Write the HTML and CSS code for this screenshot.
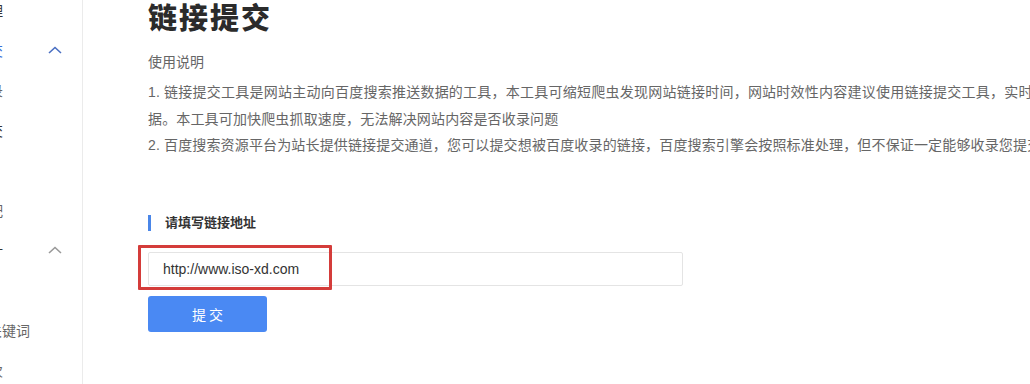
FILE: index.html
```html
<!DOCTYPE html>
<html lang="zh-CN">
<head>
<meta charset="utf-8">
<title>链接提交</title>
<link rel="stylesheet" href="styles.css">
</head>
<body>
<div class="layout">
  <aside class="sidebar">
    <ul class="nav">
      <li class="nav-item dark"><span class="nav-text">站点管理</span></li>
      <li class="nav-item active"><span class="nav-text">资源提交</span>
        <svg class="chev" viewBox="0 0 14 8" width="14" height="8"><path d="M1 7 L7 1.5 L13 7" fill="none" stroke="currentColor" stroke-width="1.6"/></svg>
      </li>
      <li class="nav-item gray"><span class="nav-text">普通收录</span></li>
      <li class="nav-item dark"><span class="nav-text">链接提交</span></li>
      <li class="nav-item gray"><span class="nav-text nav-text-hidden">死链</span></li>
      <li class="nav-item gray"><span class="nav-text">移动适配</span></li>
      <li class="nav-item dark"><span class="nav-text">搜索统计</span>
        <svg class="chev chev-gray" viewBox="0 0 14 8" width="14" height="8"><path d="M1 7 L7 1.5 L13 7" fill="none" stroke="currentColor" stroke-width="1.6"/></svg>
      </li>
      <li class="nav-item gray"><span class="nav-text nav-text-hidden">流量</span></li>
      <li class="nav-item gray"><span class="nav-text nav-text-left">关键词</span></li>
      <li class="nav-item gray"><span class="nav-text">抓取频次</span></li>
    </ul>
  </aside>
  <main class="main">
    <div class="content">
      <h1 class="title">链接提交</h1>
      <p class="usage-title">使用说明</p>
      <p class="usage">1. 链接提交工具是网站主动向百度搜索推送数据的工具，本工具可缩短爬虫发现网站链接时间，网站时效性内容建议使用链接提交工具，实时向搜索推送数据。本工具可加快爬虫抓取速度，无法解决网站内容是否收录问题</p>
      <p class="usage">2. 百度搜索资源平台为站长提供链接提交通道，您可以提交想被百度收录的链接，百度搜索引擎会按照标准处理，但不保证一定能够收录您提交的链接。</p>

      <h2 class="section-title">请填写链接地址</h2>
      <div class="input-wrap">
        <div class="url-input">http://www.iso-xd.com</div>
        <div class="highlight"></div>
      </div>
      <button class="submit">提 交</button>
    </div>
  </main>
</div>
</body>
</html>
```

FILE: styles.css
```css
html, body {
  margin: 0;
  padding: 0;
  background: #fff;
}
body {
  font-family: "Liberation Sans", "Noto Sans CJK SC", sans-serif;
  color: #333;
  width: 1030px;
  height: 384px;
  overflow: hidden;
}
.layout {
  display: flex;
  height: 384px;
}
.sidebar {
  width: 82px;
  flex: 0 0 82px;
  border-right: 1px solid #ebebeb;
  overflow: hidden;
}
.nav {
  list-style: none;
  margin: -10px 0 0 0;
  padding: 0;
}
.nav-item {
  height: 40px;
  display: flex;
  align-items: center;
  font-size: 14px;
  white-space: nowrap;
}
.nav-text {
  display: block;
  width: 80px;
  margin-left: -77px;
  text-align: right;
  flex: 0 0 80px;
}
.nav-text-hidden {
  margin-left: -82px;
}
.nav-text-left {
  margin-left: -12px;
  text-align: left;
}
.nav-item.dark { color: #333; }
.nav-item.gray { color: #666; }
.nav-item.active { color: #3a6fd8; }
.chev {
  margin-left: 45px;
  color: #4a6fc2;
  flex: 0 0 14px;
}
.nav-item .chev-gray {
  color: #999;
}

.main {
  flex: 1;
  padding-left: 65px;
  overflow: hidden;
}
.content {
  width: 970px;
}
.title {
  margin: 0;
  font-size: 29px;
  line-height: 32px;
  font-weight: 900;
  letter-spacing: 2px;
  color: #2b2b2b;
  font-family: "Noto Sans CJK SC", sans-serif;
}
.usage-title {
  margin: 17px 0 4px;
  font-size: 14px;
  line-height: 26px;
  color: #666;
}
.usage {
  margin: 0;
  font-size: 14px;
  line-height: 26.5px;
  letter-spacing: 0.15px;
  color: #666;
  text-align: justify;
}
.section-title {
  margin: 56px 0 0;
  border-left: 3px solid #4a86e8;
  padding-left: 14px;
  font-size: 13px;
  line-height: 16px;
  font-weight: bold;
  color: #333;
}
.input-wrap {
  position: relative;
  margin-top: 21px;
  width: 535px;
}
.url-input {
  box-sizing: border-box;
  height: 34px;
  border: 1px solid #e4e4e4;
  border-radius: 2px;
  padding-left: 14px;
  font-family: "Liberation Sans", Arial, sans-serif;
  font-size: 14px;
  line-height: 32px;
  color: #333;
}
.highlight {
  position: absolute;
  left: -10px;
  top: -7px;
  width: 194px;
  height: 45px;
  box-sizing: border-box;
  border: 3px solid #d43c3a;
  border-radius: 1px;
}
.submit {
  display: block;
  margin-top: 10px;
  width: 119px;
  height: 36px;
  border: none;
  border-radius: 3px;
  background: #4a89f3;
  color: #fff;
  font-family: "Noto Sans CJK SC", sans-serif;
  font-size: 14px;
  padding: 0;
  cursor: pointer;
}
```
